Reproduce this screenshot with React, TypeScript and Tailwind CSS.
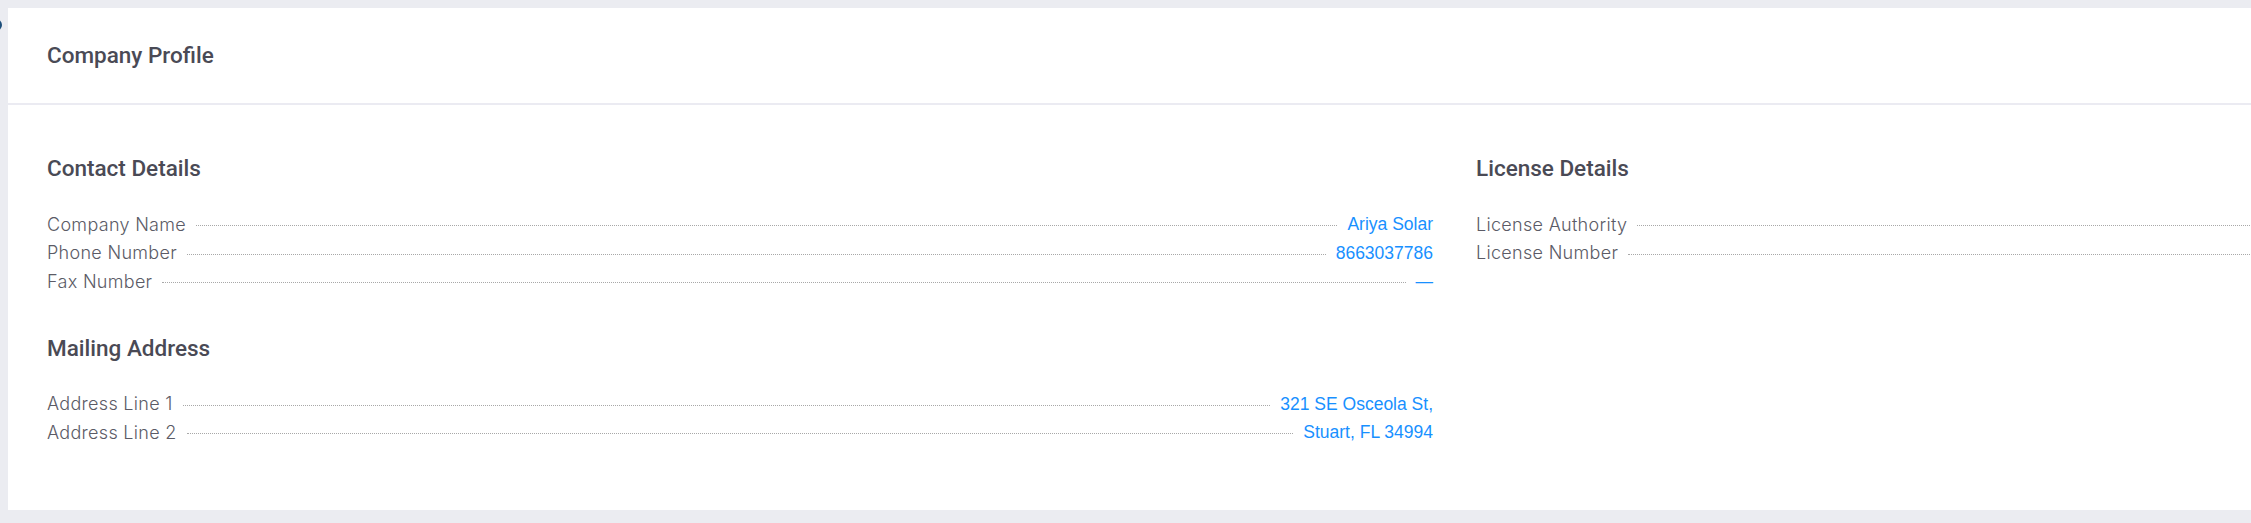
import React from 'react';

type Row = { label: string; value?: string };

const contact: Row[] = [
  { label: 'Company Name', value: 'Ariya Solar' },
  { label: 'Phone Number', value: '8663037786' },
  { label: 'Fax Number', value: '—' },
];

const mailing: Row[] = [
  { label: 'Address Line 1', value: '321 SE Osceola St,' },
  { label: 'Address Line 2', value: 'Stuart, FL 34994' },
];

// values sit past the right edge of the window in the screenshot
const license: Row[] = [{ label: 'License Authority' }, { label: 'License Number' }];

function SectionTitle({ children, className = '' }: { children: React.ReactNode; className?: string }) {
  return (
    <h3 className={`font-['Roboto',sans-serif] text-[22.5px] font-medium leading-[26px] text-[#4a4a55] ${className}`}>
      {children}
    </h3>
  );
}

function DetailRow({ label, value }: Row) {
  return (
    <div className="flex h-[28.5px] items-center">
      <span className="font-['Inter',sans-serif] text-[18px] font-light tracking-[0.3px] text-[#5b5b66]">{label}</span>
      <span className="mx-[10px] mt-[3px] h-0 flex-1 border-t border-dotted border-[#a8a8a8]" />
      {value && <span className="font-['Liberation_Sans',Arial,sans-serif] text-[17.5px] text-[#1890ff]">{value}</span>}
    </div>
  );
}

export default function App() {
  return (
    <div className="relative min-h-screen w-full overflow-hidden bg-[#ebecf1] pl-2 pt-2">
      {/* cut-off bubble at the left edge */}
      <div className="absolute left-[-10px] top-[19px] h-[12px] w-[12px] rounded-full border-2 border-[#1d4f7a]" />

      <div className="w-[2893px] bg-white">
        <div className="flex h-[97px] items-center border-b-2 border-[#ebebf2] px-[39px]">
          <h2 className="font-['Roboto',sans-serif] text-[22.5px] font-medium text-[#4a4a55]">Company Profile</h2>
        </div>

        <div className="grid grid-cols-2 gap-x-[43px] px-[39px] pb-[63px] pt-[50px]">
          <div>
            <SectionTitle>Contact Details</SectionTitle>
            <div className="mt-[29px]">
              {contact.map((r) => (
                <DetailRow key={r.label} {...r} />
              ))}
            </div>

            <SectionTitle className="mt-[39px]">Mailing Address</SectionTitle>
            <div className="mt-[29px]">
              {mailing.map((r) => (
                <DetailRow key={r.label} {...r} />
              ))}
            </div>
          </div>

          <div>
            <SectionTitle>License Details</SectionTitle>
            <div className="mt-[29px]">
              {license.map((r) => (
                <DetailRow key={r.label} {...r} />
              ))}
            </div>
          </div>
        </div>
      </div>
    </div>
  );
}
